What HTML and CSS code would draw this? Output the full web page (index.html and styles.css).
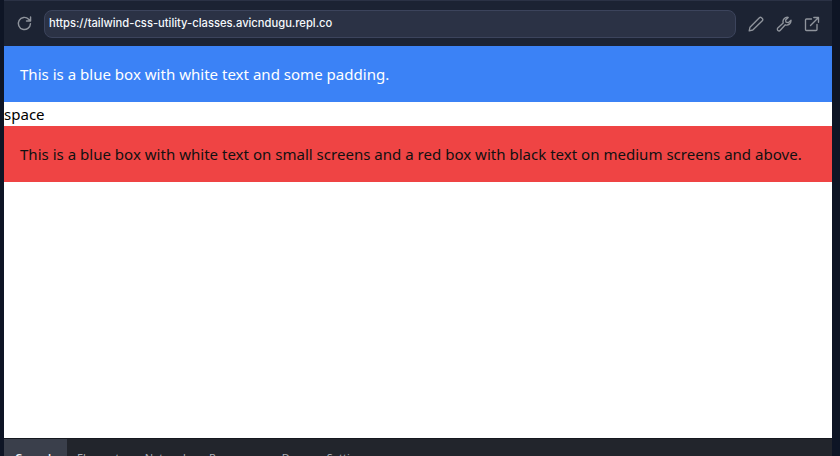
FILE: index.html
```html
<!DOCTYPE html>
<html lang="en">
<head>
<meta charset="utf-8">
<title>Preview</title>
<link rel="stylesheet" href="styles.css">
</head>
<body>
<div class="frame">
  <header class="toolbar">
    <svg class="icon reload" viewBox="0 0 16 16"><path d="M13.6 8.2a5.7 5.7 0 1 1-1.7-4.3l1.7 1.7M13.7 1.9v3.8H9.9"/></svg>
    <div class="url">https://tailwind-css-utility-classes.avicndugu.repl.co</div>
    <div class="tools">
      <svg class="icon" viewBox="0 0 16 16"><path d="M1.200 14.800l.8-3.600L11.400 1.800a1.500 1.500 0 0 1 2.100 0l.8.800a1.500 1.500 0 0 1 0 2.100L4.800 14z"/></svg>
      <svg class="icon" viewBox="0 0 16 16"><path d="M15 4.300a4.300 4.300 0 0 1-5.700 4.500l-5 5.500a1.600 1.600 0 0 1-2.500-2.300l5.400-5.100a4.300 4.300 0 0 1 5-5.500L9.600 4l.4 2.200 2.200.5z"/></svg>
      <svg class="icon" viewBox="0 0 16 16"><path d="M7.500 3H2.500a1 1 0 0 0-1 1v9.500a1 1 0 0 0 1 1H12a1 1 0 0 0 1-1V8.500M6.500 9.500L14.500 1.500M9.800 1.500h4.700v4.700"/></svg>
    </div>
  </header>
  <main class="page">
    <div class="box blue">This is a blue box with white text and some padding.</div>
    <div class="space">space</div>
    <div class="box red">This is a blue box with white text on small screens and a red box with black text on medium screens and above.</div>
  </main>
  <nav class="tabs">
    <span class="tab active">Console</span>
    <span class="tab">Elements</span>
    <span class="tab">Network</span>
    <span class="tab">Resources</span>
    <span class="tab">Dom</span>
    <span class="tab">Settings</span>
  </nav>
</div>
</body>
</html>
```
FILE: styles.css
```css
* { box-sizing: border-box; }
html, body { margin: 0; height: 100%; overflow: hidden; background: #0e1525; }
body { padding: 0 8px 0 4px; font-family: "Noto Sans", "Open Sans", sans-serif; }
.frame { height: 456px; display: flex; flex-direction: column; }
.toolbar {
  height: 46px; flex: none; display: flex; align-items: center;
  background: #1c2333; border-top: 1px solid #2b3245;
  padding: 0 12px 0 12px;
}
.icon { width: 16px; height: 16px; fill: none; stroke: #8f949c; stroke-width: 1.35; stroke-linecap: round; stroke-linejoin: round; flex: none; }
.reload { width: 17px; height: 17px; }
.url {
  flex: 1; height: 28px; margin: 0 12px 0 11px; padding: 0 4px;
  display: flex; align-items: center;
  background: #2b3245; border: 1px solid #3c445c; border-radius: 8px;
  color: #f5f9fc; font: 500 11.2px/1 "Inter", "Noto Sans", sans-serif;
}
.tools { display: flex; gap: 12px; }
.page { flex: 1; background: #fff; display: flex; flex-direction: column; color: #000; font-size: 15.05px; line-height: 24px; }
.box { height: 56px; padding: 16px; white-space: nowrap; }
.blue { background: #3b82f6; color: #fff; }
.red { background: #ef4444; color: #111; }
.space { height: 24px; }
.tabs { height: 18px; flex: none; display: flex; overflow: hidden; background: #22252c; border-top: 1px solid #15181f; color: #a8adb5; font-size: 11px; line-height: 38px; }
.tab { padding: 0 10px; white-space: nowrap; }
.active { background: #3a3f4b; color: #f0f1f3; font-weight: 600; width: 63px; padding: 0 11px; }
```
